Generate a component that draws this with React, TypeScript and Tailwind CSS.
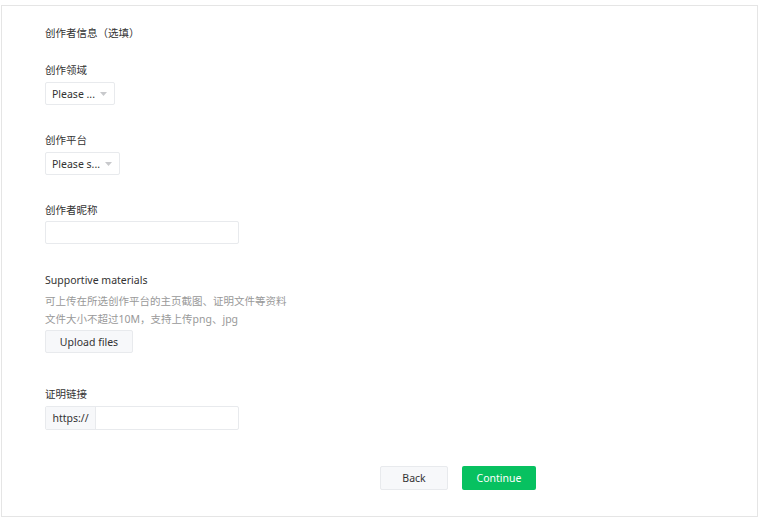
import React, { useState } from "react";

const font = { fontFamily: '"Noto Sans", "Noto Sans CJK SC", sans-serif' };

const Caret = () => (
  <svg width="7" height="4" viewBox="0 0 7 4" className="shrink-0">
    <path d="M0 0h7L3.5 4z" fill="#c8c9cc" />
  </svg>
);

const SelectBox: React.FC<{ label: string; width: string }> = ({ label, width }) => (
  <div
    className={`flex h-[23px] items-center justify-between rounded-[2px] border border-[#e8eaed] bg-white pl-[6px] pr-[7px] ${width}`}
  >
    <span className="truncate text-[10.5px] text-[#333]">{label}</span>
    <Caret />
  </div>
);

const App: React.FC = () => {
  const [nickname, setNickname] = useState("");
  const [link, setLink] = useState("");

  return (
    <div className="h-[520px] w-[759px] bg-white pl-px pt-[5px]" style={font}>
      <div className="h-[512px] w-[757px] border border-[#e5e5e5] pl-[43px] pt-[20px] text-[10.5px] leading-[14px] text-[#333]">
        <div>创作者信息（选填）</div>

        <div className="mt-[23px]">创作领域</div>
        <div className="mt-[5px]">
          <SelectBox label="Please ..." width="w-[70px]" />
        </div>

        <div className="mt-[28px]">创作平台</div>
        <div className="mt-[5px]">
          <SelectBox label="Please s..." width="w-[75px]" />
        </div>

        <div className="mt-[28px]">创作者昵称</div>
        <input
          value={nickname}
          onChange={(e) => setNickname(e.target.value)}
          className="mt-[4px] block h-[23px] w-[194px] rounded-[2px] border border-[#e8eaed] px-[6px] outline-none"
        />

        <div className="mt-[29px]">Supportive materials</div>
        <div className="mt-[5px] leading-[18px] text-[#999]">
          <div>可上传在所选创作平台的主页截图、证明文件等资料</div>
          <div>文件大小不超过10M，支持上传png、jpg</div>
        </div>
        <button className="mt-[2px] flex h-[23px] w-[88px] items-center justify-center rounded-[2px] border border-[#e8eaed] bg-[#f7f8fa] text-[10.5px] text-[#333]">
          Upload files
        </button>

        <div className="mt-[34px]">证明链接</div>
        <div className="mt-[5px] flex h-[24px] w-[194px] overflow-hidden rounded-[2px] border border-[#e8eaed]">
          <div className="flex w-[50px] items-center justify-center border-r border-[#e8eaed] bg-[#f7f8fa] text-[#333]">
            https://
          </div>
          <input
            value={link}
            onChange={(e) => setLink(e.target.value)}
            className="min-w-0 flex-1 px-[6px] outline-none"
          />
        </div>

        <div className="ml-[335px] mt-[36px] flex gap-[14px]">
          <button className="h-[24px] w-[68px] rounded-[2px] border border-[#e8eaed] bg-[#f7f8fa] text-[10.5px] text-[#333]">
            Back
          </button>
          <button className="h-[24px] w-[74px] rounded-[2px] bg-[#07c160] text-[10.5px] text-white">
            Continue
          </button>
        </div>
      </div>
    </div>
  );
};

export default App;
